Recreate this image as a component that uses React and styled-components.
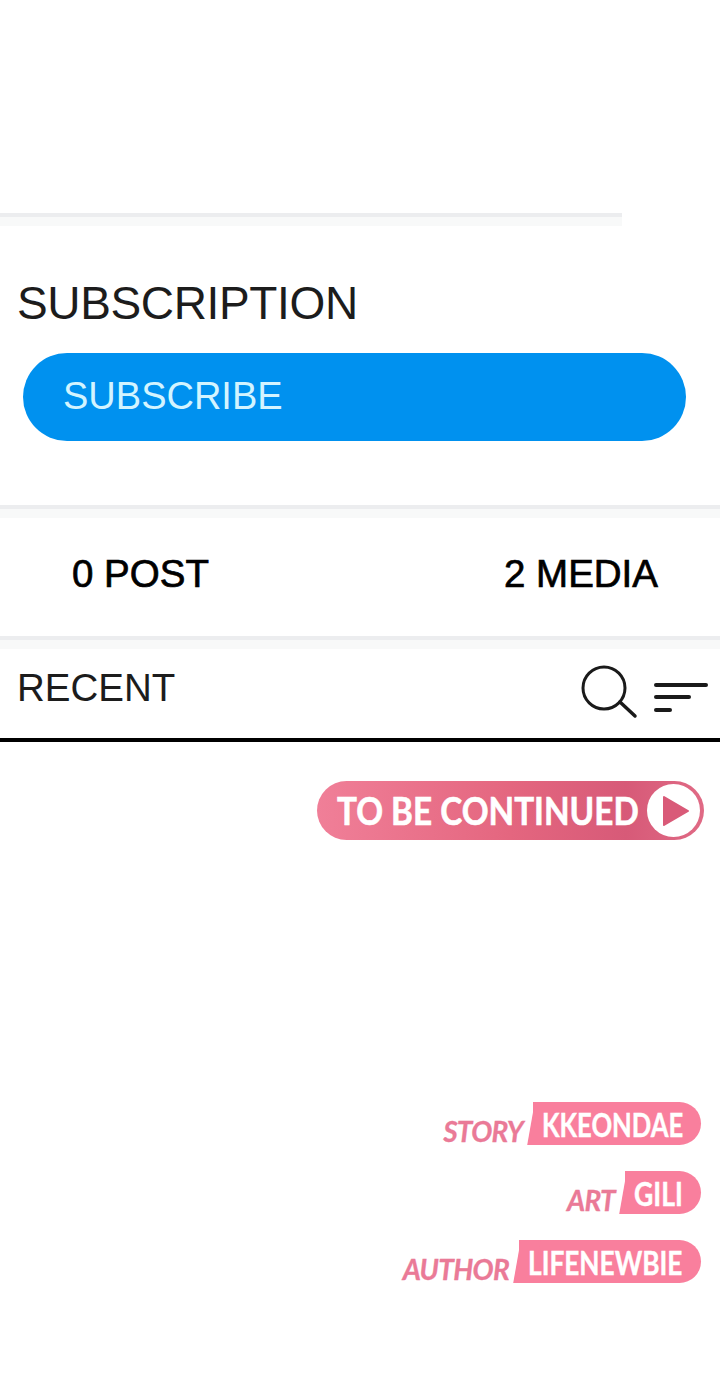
import React from 'react';
import styled, { createGlobalStyle } from 'styled-components';

const GlobalStyle = createGlobalStyle`
  html, body {
    margin: 0;
    padding: 0;
    background: #ffffff;
  }
`;

const credits = [
  { label: 'STORY', name: 'KKEONDAE', width: 140, scale: 0.8 },
  { label: 'ART', name: 'GILI', width: 48, scale: 0.83 },
  { label: 'AUTHOR', name: 'LIFENEWBIE', width: 154, scale: 0.82 },
];

const App = () => {
  return (
    <>
      <GlobalStyle />
      <Page>
        <Divider $width='622px' />
        <Title>SUBSCRIPTION</Title>
        <SubscribeButton>SUBSCRIBE</SubscribeButton>
        <Divider $gap='64px' />
        <Stats>
          <Stat>0 POST</Stat>
          <Stat>2 MEDIA</Stat>
        </Stats>
        <Divider />
        <RecentBar>
          <RecentLabel>RECENT</RecentLabel>
          <Tools>
            <svg width='60' height='56' viewBox='0 0 60 56' fill='none' stroke='#1a1a1a' strokeWidth='3'>
              <circle cx='24' cy='24' r='21' />
              <path d='M40 38 L55 52' strokeLinecap='round' strokeWidth='3.5' />
            </svg>
            <FilterIcon width='54' height='32' viewBox='0 0 54 32' stroke='#1a1a1a' strokeWidth='4' strokeLinecap='round'>
              <path d='M2 3 H52' />
              <path d='M2 15 H35' />
              <path d='M2 28 H16' />
            </FilterIcon>
          </Tools>
        </RecentBar>
        <ContinueRow>
          <ContinuePill>
            <ContinueText>TO BE CONTINUED</ContinueText>
            <PlayCircle>
              <svg width='28' height='32' viewBox='0 0 28 32'>
                <path d='M2 2 L26 16 L2 30 Z' fill='#d95a78' stroke='#d95a78' strokeWidth='2' strokeLinejoin='round' />
              </svg>
            </PlayCircle>
          </ContinuePill>
        </ContinueRow>
        <Credits>
          {credits.map((item) => (
            <CreditRow key={item.label}>
              <CreditLabel>{item.label}</CreditLabel>
              <CreditTag>
                <CreditName $width={item.width} $scale={item.scale}>{item.name}</CreditName>
              </CreditTag>
            </CreditRow>
          ))}
        </Credits>
      </Page>
    </>
  );
};

const Page = styled.div`
  width: 720px;
  min-height: 1399px;
  padding-top: 213px;
  box-sizing: border-box;
  background: #ffffff;
  overflow: hidden;
  font-family: 'Liberation Sans', Arial, sans-serif;
`;

const Divider = styled.div`
  width: ${(props) => props.$width || '100%'};
  height: 13px;
  margin-top: ${(props) => props.$gap || '0'};
  box-sizing: border-box;
  border-top: 4px solid #ecedef;
  background: #f8f9f9;
`;

const Title = styled.h2`
  margin: 54px 0 27px 17px;
  font-size: 46px;
  line-height: 46px;
  font-weight: 400;
  letter-spacing: -0.35px;
  color: #1c1c1c;
`;

const SubscribeButton = styled.div`
  display: flex;
  align-items: center;
  width: 663px;
  height: 88px;
  margin-left: 23px;
  padding: 0 0 2px 40px;
  box-sizing: border-box;
  border-radius: 44px;
  background: #0091ef;
  color: #d3f4ff;
  font-size: 38px;
`;

const Stats = styled.div`
  display: flex;
  justify-content: space-between;
  align-items: center;
  height: 118px;
  padding: 0 62px 6px 72px;
  box-sizing: border-box;
`;

const Stat = styled.span`
  font-size: 38.5px;
  color: #000000;
  -webkit-text-stroke: 0.7px #000000;
`;

const RecentBar = styled.div`
  display: flex;
  justify-content: space-between;
  align-items: center;
  height: 93px;
  padding: 0 12px 4px 17px;
  box-sizing: border-box;
  border-bottom: 4px solid #000000;
`;

const RecentLabel = styled.span`
  margin-bottom: 7px;
  font-size: 38.5px;
  color: #1c1c1c;
`;

const Tools = styled.div`
  display: flex;
  align-items: center;
  gap: 14px;
`;

const FilterIcon = styled.svg`
  margin-top: 12px;
`;

const ContinueRow = styled.div`
  display: flex;
  justify-content: flex-end;
  padding: 39px 16px 0 0;
`;

const ContinuePill = styled.div`
  display: flex;
  justify-content: space-between;
  align-items: center;
  width: 387px;
  height: 59px;
  padding: 0 4px 0 20px;
  box-sizing: border-box;
  border-radius: 30px;
  background: linear-gradient(90deg, #f07f98 0%, #e4667f 50%, #d75a78 80%, #e06a85 100%);
`;

const ContinueText = styled.span`
  width: 300px;
  min-width: 0;
  font-family: Lato, sans-serif;
  font-size: 38px;
  font-weight: 700;
  color: #ffffff;
  -webkit-text-stroke: 0.6px #ffffff;
  white-space: nowrap;
  transform: scaleX(0.875) translateY(-1px);
  transform-origin: left center;
`;

const PlayCircle = styled.div`
  display: flex;
  flex-shrink: 0;
  align-items: center;
  justify-content: center;
  width: 53px;
  height: 53px;
  padding-left: 5px;
  box-sizing: border-box;
  border-radius: 50%;
  background: #ffffff;
`;

const Credits = styled.div`
  display: flex;
  flex-direction: column;
  align-items: flex-end;
  gap: 26px;
  margin-top: 262px;
  padding-right: 19px;
`;

const CreditRow = styled.div`
  display: flex;
  align-items: flex-end;
  gap: 10px;
`;

const CreditLabel = styled.span`
  font-family: Lato, sans-serif;
  font-size: 28px;
  line-height: 28px;
  font-style: italic;
  font-weight: 700;
  letter-spacing: -0.7px;
  color: #ea7a97;
  -webkit-text-stroke: 0.3px #ea7a97;
`;

const CreditTag = styled.span`
  position: relative;
  z-index: 0;
  display: flex;
  align-items: center;
  height: 43px;
  padding: 2px 19px 0 9px;
  box-sizing: border-box;
  border-radius: 0 22px 22px 0;
  background: #f97f9d;
  &::before {
    content: '';
    position: absolute;
    z-index: -1;
    top: 0;
    bottom: 0;
    left: -2px;
    width: 20px;
    background: #f97f9d;
    transform: skewX(-10deg);
  }
`;

const CreditName = styled.span`
  width: ${(props) => props.$width}px;
  min-width: 0;
  font-family: Lato, sans-serif;
  font-size: 32px;
  font-weight: 700;
  color: #ffffff;
  -webkit-text-stroke: 0.4px #ffffff;
  white-space: nowrap;
  transform: scaleX(${(props) => props.$scale});
  transform-origin: left center;
`;

export default App;
